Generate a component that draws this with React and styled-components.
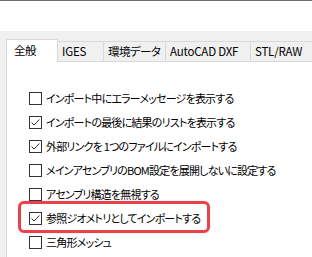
import React from 'react'
import styled, { createGlobalStyle } from 'styled-components'

const Global = createGlobalStyle`
  html, body { margin: 0; padding: 0; background: #fff; }
  body {
    font-family: "Noto Sans CJK JP", "Noto Sans", sans-serif;
    font-size: 11px;
    color: #000;
    font-feature-settings: "palt";
  }
`

const Window = styled.div`
  width: 312px;
  height: 257px;
  overflow: hidden;
  border-top: 1px solid #6f6f6f;
  box-sizing: border-box;
  background: #fff;
`

const TopSpace = styled.div`
  height: 30px;
  background: #fff;
`

const Dialog = styled.div`
  background: #f0f0f0;
  padding: 8px 0 0 6px;
  height: 226px;
  box-sizing: border-box;
`

const TabStrip = styled.div`
  display: flex;
  align-items: flex-end;
  height: 22px;
`

const Tab = styled.div`
  box-sizing: border-box;
  flex: none;
  width: ${p => p.w}px;
  height: ${p => (p.active ? 23 : 20)}px;
  margin-bottom: ${p => (p.active ? -1 : 0)}px;
  position: relative;
  z-index: ${p => (p.active ? 1 : 0)};
  background: ${p => (p.active ? '#fff' : '#f0f0f0')};
  border-top: 1px solid #d9d9d9;
  border-right: 1px solid #d9d9d9;
  border-left: ${p => (p.active ? '1px solid #d9d9d9' : 'none')};
  padding-left: ${p => (p.active ? 7 : 4)}px;
  line-height: ${p => (p.active ? 20 : 18)}px;
  font-size: 11.5px;
  letter-spacing: ${p => (p.cjk ? -0.6 : -0.2)}px;
  white-space: nowrap;
`

const Panel = styled.div`
  background: #fff;
  border-top: 1px solid #d9d9d9;
  border-left: 1px solid #d9d9d9;
  height: 100%;
  padding: 24px 0 0 22px;
  box-sizing: border-box;
`

const Row = styled.label`
  position: relative;
  display: flex;
  align-items: center;
  height: 24px;
  gap: 4px;
  white-space: nowrap;
`

const Text = styled.span`
  letter-spacing: -0.8px;
`

const Box = styled.span`
  flex: none;
  width: 13px;
  height: 13px;
  box-sizing: border-box;
  border: 1px solid #333;
  background: #fff;
  display: flex;
  align-items: center;
  justify-content: center;
`

const Highlight = styled.span`
  position: absolute;
  left: -11px;
  top: -5px;
  width: 192px;
  height: 32px;
  box-sizing: border-box;
  border: 3px solid #e8424a;
  border-radius: 6px;
  box-shadow: 0 0 1px rgba(232, 66, 74, 0.5);
  pointer-events: none;
`

const Check = () => (
  <svg width="11" height="11" viewBox="0 0 11 11">
    <polyline points="1.5,5.5 4,8 9.5,2.5" fill="none" stroke="#333" strokeWidth="1" />
  </svg>
)

const tabs = [
  { label: '全般', w: 52, active: true, cjk: true },
  { label: 'IGES', w: 46 },
  { label: '環境データ', w: 62, cjk: true },
  { label: 'AutoCAD DXF', w: 85 },
  { label: 'STL/RAW', w: 70 },
]

const options = [
  { label: 'インポート中にエラーメッセージを表示する', checked: false },
  { label: 'インポートの最後に結果のリストを表示する', checked: true },
  { label: '外部リンクを 1つのファイルにインポートする', checked: true },
  { label: 'メインアセンブリのBOM設定を展開しないに設定する', checked: false },
  { label: 'アセンブリ構造を無視する', checked: false },
  { label: '参照ジオメトリとしてインポートする', checked: true, marked: true },
  { label: '三角形メッシュ', checked: false },
]

const App = () => (
  <Window>
    <Global />
    <TopSpace />
    <Dialog>
      <TabStrip>
        {tabs.map(t => (
          <Tab key={t.label} w={t.w} active={t.active} cjk={t.cjk}>{t.label}</Tab>
        ))}
      </TabStrip>
      <Panel>
        {options.map(o => (
          <Row key={o.label}>
            <Box>{o.checked && <Check />}</Box>
            <Text>{o.label}</Text>
            {o.marked && <Highlight />}
          </Row>
        ))}
      </Panel>
    </Dialog>
  </Window>
)

export default App
